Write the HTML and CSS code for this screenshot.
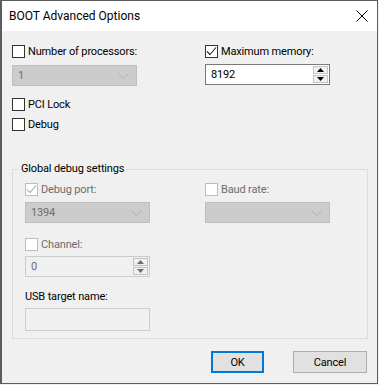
FILE: index.html
```html
<!DOCTYPE html>
<html lang="en">
<head>
    <meta charset="UTF-8">
    <title>BOOT Advanced Options</title>
    <link rel="stylesheet" href="styles.css">
</head>
<body>
    <div class="window">
        <div class="titlebar">
            <span class="title">BOOT Advanced Options</span>
            <svg class="close" width="12" height="12" viewBox="0 0 12 12">
                <path d="M0.5 0.5 L11.5 11.5 M11.5 0.5 L0.5 11.5" stroke="#000" stroke-width="1"/>
            </svg>
        </div>

        <div class="content">
            <div class="top-grid">
                <div class="col">
                    <label class="check">
                        <span class="box"></span>
                        <span>Number of processors:</span>
                    </label>
                    <div class="combo disabled combo-first">
                        <span>1</span>
                        <svg class="chev" width="11" height="6" viewBox="0 0 11 6"><path d="M0.5 0.5 L5.5 5.5 L10.5 0.5" fill="none" stroke="#b0b0b0"/></svg>
                    </div>
                    <label class="check pci">
                        <span class="box"></span>
                        <span>PCI Lock</span>
                    </label>
                    <label class="check debug">
                        <span class="box"></span>
                        <span>Debug</span>
                    </label>
                </div>
                <div class="col">
                    <label class="check">
                        <span class="box">
                            <svg width="11" height="11" viewBox="0 0 11 11"><path d="M1 5.5 L4 8.5 L10 1.5" fill="none" stroke="#222" stroke-width="1.1"/></svg>
                        </span>
                        <span>Maximum memory:</span>
                    </label>
                    <div class="spin spin-mem">
                        <span class="spin-value">8192</span>
                        <div class="spin-btns">
                            <span class="spin-btn"><svg width="7" height="4" viewBox="0 0 7 4"><path d="M0 4 L3.5 0 L7 4Z" fill="#000"/></svg></span>
                            <span class="spin-btn"><svg width="7" height="4" viewBox="0 0 7 4"><path d="M0 0 L3.5 4 L7 0Z" fill="#000"/></svg></span>
                        </div>
                    </div>
                </div>
            </div>

            <fieldset class="group">
                <legend>Global debug settings</legend>
                <div class="group-inner">
                    <div class="group-grid">
                        <div class="col">
                            <label class="check off">
                                <span class="box">
                                    <svg width="11" height="11" viewBox="0 0 11 11"><path d="M1 5.5 L4 8.5 L10 1.5" fill="none" stroke="#bcbcbc" stroke-width="1.2"/></svg>
                                </span>
                                <span>Debug port:</span>
                            </label>
                            <div class="combo disabled">
                                <span>1394</span>
                                <svg class="chev" width="11" height="6" viewBox="0 0 11 6"><path d="M0.5 0.5 L5.5 5.5 L10.5 0.5" fill="none" stroke="#b0b0b0"/></svg>
                            </div>
                        </div>
                        <div class="col">
                            <label class="check off">
                                <span class="box"></span>
                                <span>Baud rate:</span>
                            </label>
                            <div class="combo disabled">
                                <span></span>
                                <svg class="chev" width="11" height="6" viewBox="0 0 11 6"><path d="M0.5 0.5 L5.5 5.5 L10.5 0.5" fill="none" stroke="#b0b0b0"/></svg>
                            </div>
                        </div>
                    </div>

                    <label class="check off channel">
                        <span class="box"></span>
                        <span>Channel:</span>
                    </label>
                    <div class="spin spin-off">
                        <span class="spin-value">0</span>
                        <div class="spin-btns">
                            <span class="spin-btn"><svg width="7" height="4" viewBox="0 0 7 4"><path d="M0 4 L3.5 0 L7 4Z" fill="#6d6d6d"/></svg></span>
                            <span class="spin-btn"><svg width="7" height="4" viewBox="0 0 7 4"><path d="M0 0 L3.5 4 L7 0Z" fill="#6d6d6d"/></svg></span>
                        </div>
                    </div>

                    <div class="field-label">USB target name:</div>
                    <div class="textbox disabled-box"></div>
                </div>
            </fieldset>

            <div class="buttons">
                <button class="btn btn-default">OK</button>
                <button class="btn">Cancel</button>
            </div>
        </div>
    </div>
</body>
</html>
```

FILE: styles.css
```css
body {
    margin: 0;
    background: #f0f0f0;
    font-family: Roboto, "Liberation Sans", sans-serif;
    font-size: 11px;
    letter-spacing: -0.15px;
    color: #000;
}

.window {
    width: 378px;
    height: 384px;
    box-sizing: border-box;
    border: 1px solid #5c5c5c;
    border-left-width: 2px;
    background: #f0f0f0;
}

.titlebar {
    height: 30px;
    background: #fff;
    display: flex;
    align-items: center;
    justify-content: space-between;
    padding: 0 8px 0 7px;
}

.title {
    font-size: 12px;
    letter-spacing: 0;
}

.close {
    display: block;
    margin-right: 1px;
}

.content {
    padding: 14px 0 0 10px;
}

.top-grid {
    display: grid;
    grid-template-columns: 193px 125px;
}

.col {
    display: flex;
    flex-direction: column;
    align-items: flex-start;
}

.check {
    display: flex;
    align-items: center;
    height: 13px;
    line-height: 13px;
    white-space: nowrap;
}

.box {
    width: 11px;
    height: 11px;
    border: 1px solid #333;
    background: #fff;
    margin-right: 3px;
    display: flex;
    align-items: center;
    justify-content: center;
}

.check.off {
    color: #6d6d6d;
}

.check.off .box {
    border-color: #bcbcbc;
}

.pci {
    margin-top: 12px;
}

.debug {
    margin-top: 7px;
}

.combo {
    width: 125px;
    height: 21px;
    box-sizing: border-box;
    margin-top: 6px;
    display: flex;
    align-items: center;
    justify-content: space-between;
    padding: 0 7px 0 5px;
}

.combo-first {
    margin-top: 7px;
}

.combo.disabled {
    background: #cccccc;
    border: 1px solid #bfbfbf;
    color: #6d6d6d;
}

.spin {
    width: 125px;
    box-sizing: border-box;
    display: flex;
    align-items: stretch;
    justify-content: space-between;
    padding: 1px 1px 1px 5px;
}

.spin-mem {
    height: 21px;
    margin-top: 6px;
    background: #fff;
    border: 1px solid #7a7a7a;
}

.spin-off {
    height: 21px;
    margin-top: 5px;
    background: #f0f0f0;
    border: 1px solid #cccccc;
    color: #6d6d6d;
}

.spin-value {
    line-height: 17px;
}

.spin-btns {
    width: 15px;
    display: flex;
    flex-direction: column;
    gap: 1px;
}

.spin-btn {
    flex: 1;
    box-sizing: border-box;
    border: 1px solid #c4c4c4;
    background: #f0f0f0;
    display: flex;
    align-items: center;
    justify-content: center;
}

.group {
    width: 356px;
    box-sizing: border-box;
    margin: 30px 0 0 0;
    padding: 0;
    border: 1px solid #dcdcdc;
}

.group legend {
    margin-left: 6px;
    padding: 0 2px;
    line-height: 16px;
}

.group-inner {
    padding: 6px 0 7px 12px;
}

.group-grid {
    display: grid;
    grid-template-columns: 180px 125px;
}

.channel {
    margin-top: 15px;
}

.field-label {
    margin-top: 12px;
    line-height: 15px;
}

.textbox {
    width: 125px;
    height: 23px;
    box-sizing: border-box;
    margin-top: 4px;
}

.disabled-box {
    background: #f0f0f0;
    border: 1px solid #cccccc;
}

.buttons {
    display: flex;
    justify-content: flex-end;
    gap: 29px;
    margin-top: 12px;
    padding-right: 10px;
}

.btn {
    height: 22px;
    width: 74px;
    font-family: inherit;
    font-size: 11px;
    letter-spacing: -0.15px;
    color: #000;
    background: #e1e1e1;
    border: 1px solid #adadad;
    padding: 0;
}

.btn-default {
    width: 53px;
    border: 2px solid #0078d7;
}
```
